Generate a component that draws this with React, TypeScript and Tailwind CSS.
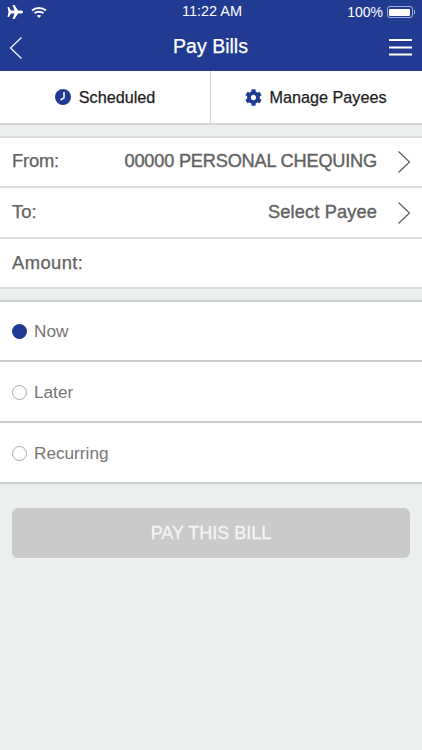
import { FaCog } from "react-icons/fa";

const F = '[font-family:"Liberation_Sans",Arial,sans-serif]';

function Chevron() {
  return (
    <svg width="14" height="24" viewBox="0 0 14 24" fill="none" stroke="#555" strokeWidth="1.1">
      <path d="M1.5 1.5 L12.5 12 L1.5 22.5" />
    </svg>
  );
}

function Row({ label, value, h, labelCls = "", valueCls = "" }: { label: string; value?: string; h: string; labelCls?: string; valueCls?: string }) {
  return (
    <div className={`${h} flex items-center bg-white border-b-2 border-[#dadcdd] pl-3 pr-[11px] text-[#626262] text-[18.4px] [-webkit-text-stroke:0.25px_#626262]`}>
      <span className={`${labelCls} ${value ? "flex-1 -mt-[2px]" : "flex-1"}`}>{label}</span>
      {value && <span className={`${valueCls} mr-[20px] [-webkit-text-stroke:0.4px_#626262] text-[18.2px]`}>{value}</span>}
      {value && <Chevron />}
    </div>
  );
}

function Radio({ label, on, h, pad }: { label: string; on?: boolean; h: string; pad: string }) {
  return (
    <div className={`${h} ${pad} flex items-center bg-white border-b-2 border-[#cbcdce] pl-[11.5px] text-[#757575] text-[17.2px]`}>
      <span className={on ? "w-[15px] h-[15px] rounded-full bg-[#1f3a93]" : "w-[15px] h-[15px] rounded-full border border-[#a8a8a8]"} />
      <span className="ml-[7.5px]">{label}</span>
    </div>
  );
}

export default function App() {
  return (
    <div className={`${F} w-[422px] h-[750px] bg-[#ebeff0] flex flex-col overflow-hidden`}>
      <div className="h-[71px] bg-[#213b93] text-white flex flex-col shrink-0">
        <div className="h-[24px] flex items-center justify-between pl-[7px] pr-[7px] text-[14.5px]">
          <div className="flex items-center gap-[8px] w-[100px]">
            <svg width="16" height="14" viewBox="0 0 16 14" fill="white"><path d="M0.5 2 L2 2 L4 5.5 L7.5 5.5 L5.5 0 L7.5 0 L11 5.5 L14 5.5 C15.5 5.500 16 6.500 16 7 C16 7.500 15.500 8.500 14 8.500 L11 8.500 L7.500 14 L5.500 14 L7.500 8.500 L4 8.500 L2 12 L0.500 12 L1.500 7 Z" /></svg>
            <svg width="16" height="13" viewBox="0 0 16 12" fill="none" stroke="white" strokeWidth="2"><path d="M1 4 C5 0.5 11 0.5 15 4" /><path d="M3.5 6.8 C6 4.800 10 4.800 12.500 6.800" /><path d="M8 11.500 L5.800 9.300 C7 8.300 9 8.300 10.200 9.300 Z" fill="white" stroke="none" /></svg>
          </div>
          <span className="ml-[2px]">11:22 AM</span>
          <div className="flex items-center justify-end w-[100px]">
            <span className="mr-[4px] text-[14px]">100%</span>
            <div className="w-[26px] h-[12px] border border-white/60 rounded-[3px] p-[1.5px]"><div className="w-full h-full bg-white rounded-[1px]" /></div>
            <div className="w-[1px] h-[4px] bg-white/60 ml-[1px]" />
          </div>
        </div>
        <div className="flex-1 flex items-center justify-between pl-[9px] pr-[10px]">
          <div className="w-[23px]">
            <svg width="14" height="24" viewBox="0 0 14 24" fill="none" stroke="white" strokeWidth="1.200"><path d="M12.500 1.500 L1.500 12 L12.500 22.500" /></svg>
          </div>
          <span className="text-[19.500px] -mt-[1px] [-webkit-text-stroke:0.25px_white]">Pay Bills</span>
          <svg width="23" height="17" viewBox="0 0 23 17" fill="none" stroke="white" strokeWidth="2"><path d="M0 1 H23 M0 8.500 H23 M0 15.500 H23" /></svg>
        </div>
      </div>

      <div className="h-[54px] bg-white border-b-2 border-[#d5d7d8] flex shrink-0 text-[#1c1c1c] text-[16.200px] [-webkit-text-stroke:0.25px_#1c1c1c]">
        <div className="w-[211px] flex items-center justify-center gap-[8px] border-r border-[#cfd1d2]">
          <svg width="16" height="16" viewBox="0 0 16 16"><circle cx="8" cy="8" r="8" fill="#213b93" /><path d="M9 3 V8.800 L5.500 11" fill="none" stroke="white" strokeWidth="1.500" /></svg>
          <span>Scheduled</span>
        </div>
        <div className="flex-1 flex items-center justify-center gap-[8px] pr-[2px]">
          <FaCog size={17} color="#213b93" />
          <span>Manage Payees</span>
        </div>
      </div>

      <div className="h-[11px] shrink-0" />
      <div className="border-t-2 border-[#dadcdd]">
        <Row h="h-[50px]" label="From:" labelCls="tracking-[-0.2px]" value="00000 PERSONAL CHEQUING" valueCls="tracking-[-0.2px]" />
        <Row h="h-[51px]" label="To:" value="Select Payee" valueCls="tracking-[0.15px]" />
        <Row h="h-[50px]" label="Amount:" labelCls="tracking-[0.4px]" />
      </div>

      <div className="h-[11px] shrink-0" />
      <div className="border-t-2 border-[#cbcdce]">
        <Radio h="h-[60px]" pad="pt-[1px]" label="Now" on />
        <Radio h="h-[61px]" pad="pt-[2px]" label="Later" />
        <Radio h="h-[61px]" pad="pt-[2px]" label="Recurring" />
      </div>

      <div className="px-3 pt-[24px]">
        <div className="h-[50px] rounded-[6px] bg-[#cacaca] flex items-center justify-center text-[#f5f5f5] text-[18px] [-webkit-text-stroke:0.3px_#f5f5f5]">PAY THIS BILL</div>
      </div>
    </div>
  );
}
